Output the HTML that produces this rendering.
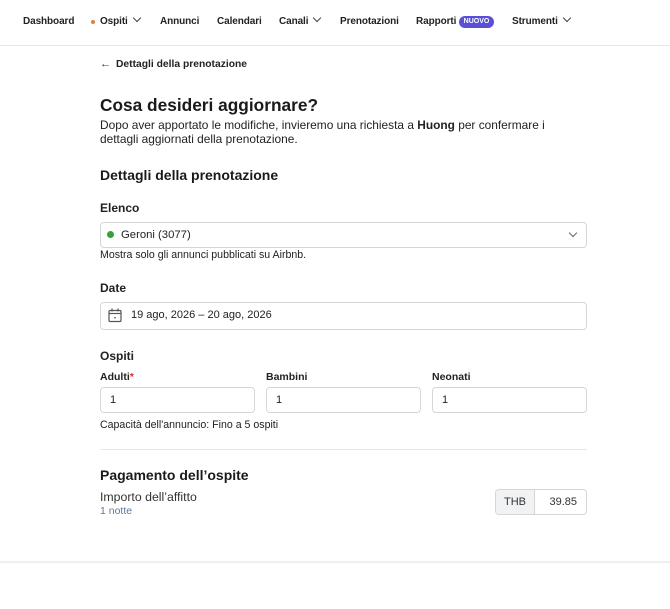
<!DOCTYPE html>
<html><head><meta charset="utf-8"><style>
*{margin:0;padding:0;box-sizing:border-box}
body{width:670px;height:609px;background:#fff;font-family:"Liberation Sans",sans-serif;color:#222;position:relative;overflow:hidden}
.a{position:absolute;white-space:nowrap}
.nav{font-size:10px;font-weight:bold;color:#222;letter-spacing:-0.1px;top:16px}
.chev{display:inline-block;width:6px;height:6px;border-right:1.2px solid #444;border-bottom:1.2px solid #444;transform:rotate(45deg);margin-left:6px;position:relative;top:-3px}
.box{position:absolute;border:1px solid #d6d6d6;border-radius:4px;background:#fff}
.lbl{font-size:12px;font-weight:bold;color:#222}
.t{font-size:11px;color:#222}
</style></head><body>
<div class="a nav" style="left:23px">Dashboard</div>
<div class="a" style="left:91px;top:20px;width:4px;height:4px;border-radius:50%;background:#e0813a"></div>
<div class="a nav" style="left:100px">Ospiti<span class="chev"></span></div>
<div class="a nav" style="left:160px">Annunci</div>
<div class="a nav" style="left:217px">Calendari</div>
<div class="a nav" style="left:279px">Canali<span class="chev"></span></div>
<div class="a nav" style="left:340px">Prenotazioni</div>
<div class="a nav" style="left:416px">Rapporti</div>
<div class="a" style="left:459px;top:16px;width:35px;height:12px;border-radius:6px;background:#5b4fd6;color:#fff;font-size:7px;font-weight:bold;text-align:center;line-height:12px">NUOVO</div>
<div class="a nav" style="left:512px">Strumenti<span class="chev"></span></div>
<div class="a" style="left:0;top:45px;width:670px;height:1px;background:#e8e8e8"></div>

<div class="a" style="left:100px;top:58px;font-size:11px;color:#333">←</div>
<div class="a" style="left:116px;top:59px;font-size:10.3px;font-weight:bold;color:#222">Dettagli della prenotazione</div>

<div class="a" style="left:100px;top:95px;font-size:17.3px;font-weight:bold;color:#1a1a1a">Cosa desideri aggiornare?</div>
<div class="a t" style="left:100px;top:118px;font-size:11.9px">Dopo aver apportato le modifiche, invieremo una richiesta a <b>Huong</b> per confermare i</div>
<div class="a t" style="left:100px;top:132px;font-size:11.9px">dettagli aggiornati della prenotazione.</div>

<div class="a" style="left:100px;top:167px;font-size:14px;font-weight:bold;color:#1a1a1a">Dettagli della prenotazione</div>

<div class="a lbl" style="left:100px;top:201px">Elenco</div>
<div class="box" style="left:100px;top:222px;width:487px;height:26px"></div>
<div class="a" style="left:107px;top:231px;width:7px;height:7px;border-radius:50%;background:#3aa03a"></div>
<div class="a t" style="left:121px;top:229px;font-size:11.3px">Geroni (3077)</div>
<div class="a" style="left:570px;top:230px;width:6px;height:6px;border-right:1.2px solid #666;border-bottom:1.2px solid #666;transform:rotate(45deg)"></div>
<div class="a t" style="left:100px;top:249px;font-size:10.6px">Mostra solo gli annunci pubblicati su Airbnb.</div>

<div class="a lbl" style="left:100px;top:281px">Date</div>
<div class="box" style="left:100px;top:302px;width:487px;height:28px"></div>
<svg class="a" style="left:108px;top:308px" width="14" height="15" viewBox="0 0 14 15"><rect x="1" y="2.5" width="12" height="11" rx="1" fill="none" stroke="#555" stroke-width="1.2"/><line x1="1" y1="5.5" x2="13" y2="5.5" stroke="#555" stroke-width="1.2"/><line x1="4" y1="0.5" x2="4" y2="3.5" stroke="#555" stroke-width="1.2"/><line x1="10" y1="0.5" x2="10" y2="3.5" stroke="#555" stroke-width="1.2"/><rect x="6.3" y="9" width="1.5" height="1.5" fill="#555"/></svg>
<div class="a t" style="left:131px;top:309px">19 ago, 2026 – 20 ago, 2026</div>

<div class="a lbl" style="left:100px;top:349px">Ospiti</div>
<div class="a" style="left:100px;top:371px;font-size:10.5px;font-weight:bold">Adulti<span style="color:#c33">*</span></div>
<div class="a" style="left:266px;top:371px;font-size:10.5px;font-weight:bold">Bambini</div>
<div class="a" style="left:432px;top:371px;font-size:10.5px;font-weight:bold">Neonati</div>
<div class="box" style="left:100px;top:387px;width:155px;height:26px"></div>
<div class="box" style="left:266px;top:387px;width:155px;height:26px"></div>
<div class="box" style="left:432px;top:387px;width:155px;height:26px"></div>
<div class="a t" style="left:110px;top:394px">1</div>
<div class="a t" style="left:276px;top:394px">1</div>
<div class="a t" style="left:442px;top:394px">1</div>
<div class="a t" style="left:100px;top:419px;font-size:10.6px">Capacità dell'annuncio: Fino a 5 ospiti</div>

<div class="a" style="left:100px;top:449px;width:487px;height:1px;background:#e8e8e8"></div>

<div class="a" style="left:100px;top:467px;font-size:14px;font-weight:bold;color:#1a1a1a">Pagamento dell’ospite</div>
<div class="a t" style="left:100px;top:490px;font-size:12.3px;color:#333">Importo dell’affitto</div>
<div class="a" style="left:100px;top:505px;font-size:10.5px;color:#5a7a9a">1 notte</div>
<div class="box" style="left:495px;top:489px;width:92px;height:26px;overflow:hidden">
<div style="position:absolute;left:0;top:0;width:39px;height:24px;background:#f1f2f4;border-right:1px solid #d6d6d6;font-size:11px;text-align:center;line-height:24px;color:#333">THB</div>
<div style="position:absolute;right:9px;top:0;line-height:24px;font-size:11px;color:#333">39.85</div>
</div>

<div class="a" style="left:0;top:561px;width:670px;height:2px;background:#f0f0f0"></div>
</body></html>
